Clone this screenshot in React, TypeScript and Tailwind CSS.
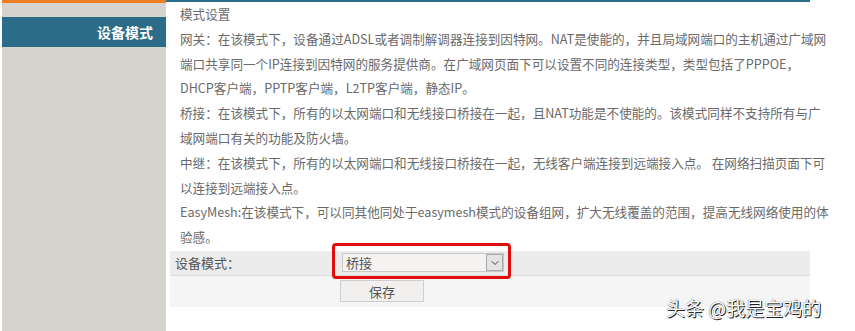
import { ChevronDown } from 'lucide-react';

const font = { fontFamily: '"Noto Sans CJK SC", "Noto Sans", sans-serif' };

export default function App() {
  return (
    <div
      className="relative w-[855px] h-[331px] bg-white flex overflow-hidden"
      style={font}
    >
      {/* Sidebar */}
      <aside className="ml-[2px] w-[164px] h-full bg-[#d6d3cf] flex flex-col">
        <div className="h-[3px] bg-[#ef7d22]" />
        <div className="h-[14px]" />
        <div className="h-[30px] bg-[#2b6d88] flex items-center justify-end pr-[13px] text-white text-[14px] font-bold">
          设备模式
        </div>
      </aside>

      {/* Content */}
      <main className="w-[644px] flex flex-col">
        <div className="h-[2px] bg-[#2b6d88]" />
        <div className="pl-[14px] text-[12.6px] leading-[24.8px] text-[#6a6a6a] whitespace-nowrap">
          <p>模式设置</p>
          <p>
            网关：在该模式下，设备通过ADSL或者调制解调器连接到因特网。NAT是使能的，并且局域网端口的主机通过广域网
            <br />
            端口共享同一个IP连接到因特网的服务提供商。在广域网页面下可以设置不同的连接类型，类型包括了PPPOE，
            <br />
            DHCP客户端，PPTP客户端，L2TP客户端，静态IP。
          </p>
          <p>
            桥接：在该模式下，所有的以太网端口和无线接口桥接在一起，且NAT功能是不使能的。该模式同样不支持所有与广
            <br />
            域网端口有关的功能及防火墙。
          </p>
          <p>
            中继：在该模式下，所有的以太网端口和无线接口桥接在一起，无线客户端连接到远端接入点。 在网络扫描页面下可
            <br />
            以连接到远端接入点。
          </p>
          <p>
            EasyMesh:在该模式下，可以同其他同处于easymesh模式的设备组网，扩大无线覆盖的范围，提高无线网络使用的体
            <br />
            验感。
          </p>
        </div>

        <div className="ml-[4px] mt-[1px] w-[640px] text-[13px] text-[#555]">
          <div className="h-[25px] bg-[#ececec] border-b border-[#dcdcdc] flex items-center">
            <span className="w-[172px] pl-[5px]">设备模式：</span>
            <div className="w-[162px] h-[19px] bg-[#f4f3f2] border border-[#c9c9c9] flex items-center">
              <span className="flex-1 pl-[3px] leading-none">桥接</span>
              <div className="w-[17px] h-[17px] border border-[#a9a9a9] bg-[#e4e4e4] flex items-center justify-center">
                <ChevronDown className="w-[12px] h-[12px] text-[#444]" strokeWidth={2} />
              </div>
            </div>
          </div>
          <div className="h-[31px] bg-[#f5f5f5] pl-[170px] flex items-center">
            <button className="w-[84px] h-[22px] bg-[#f1f0ef] border border-[#cfcfcf] text-[#555] text-[13px] leading-none">
              保存
            </button>
          </div>
        </div>
      </main>

      {/* Red annotation highlight */}
      <div className="absolute left-[332px] top-[243px] w-[179px] h-[36px] border-[3px] border-[#e00d0d] rounded-[4px]" />

      {/* Watermark */}
      <div className="absolute left-[666px] top-[296px] text-[19px] leading-[24px] text-white [text-shadow:1px_1px_0_#222,0_0_1px_#333] whitespace-nowrap">
        头条 @我是宝鸡的
      </div>
    </div>
  );
}
